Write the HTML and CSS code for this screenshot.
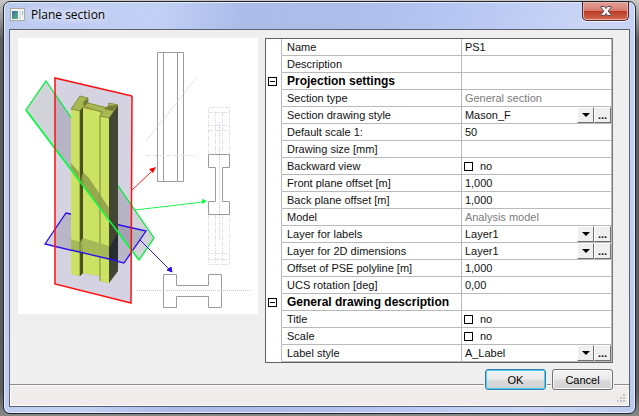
FILE: index.html
```html
<!DOCTYPE html>
<html lang="en">
<head>
<meta charset="utf-8">
<title>Plane section</title>
<link rel="stylesheet" href="styles.css">
</head>
<body>
<main class="window">
  <header class="titlebar">
    <svg class="app-icon" width="15" height="13" viewBox="0 0 15 13" aria-hidden="true">
      <defs><linearGradient id="pane" x1="0" y1="0" x2="1" y2="1"><stop offset="0" stop-color="#3b6ea0"/><stop offset="1" stop-color="#58b87e"/></linearGradient></defs>
      <rect x=".5" y=".5" width="14" height="12" fill="#f4f4f2" stroke="#aaa9a4"/>
      <rect x="2" y="3" width="6" height="8" fill="url(#pane)"/>
      <rect x="9" y="3" width="2" height="8" fill="#e1e1e1"/>
      <rect x="12" y="3" width="1" height="4" fill="#98b7aa"/>
    </svg>
    <h1 class="title">Plane section</h1>
    <button class="close" type="button" aria-label="Close">
      <svg width="12" height="10" viewBox="0 0 12 10" aria-hidden="true"><path d="M1 .5h3.500L6 2.500 7.500.5H11v1L8.200 5 11 8.500v1H7.500L6 7.500 4.500 9.500H1v-1L3.800 5 1 1.500z" fill="#f5f5f5" stroke="#59494f"/></svg>
    </button>
  </header>
  <form class="client">
    <div class="content">
      <figure class="preview">
        <svg class="drawing" viewBox="0 0 240 276" role="img" aria-label="Section planes through a column">
          <path d="M37 40 114 58 113 265 37 246z" fill="#d5d2e1"/>
          <path d="M28 43 136 200 121 222 8 72z" fill="#77778c" fill-opacity=".33"/>
          <path d="M48 175 128 193 106 225 27 206z" fill="#77778c" fill-opacity=".3"/>
          <path d="M28 43 136 200 121 222 8 72z" fill="none" stroke="#00f03c" stroke-width="1.300"/>
          <path d="M48 175 128 193 106 225 27 206z" fill="none" stroke="#2a0df0" stroke-width="1.300"/>
          <path d="M53 71 62 58 70 60V65L90 70 91 65 100 67V233L91 245 82 243V238L65 235 62 238 53 236z" fill="#a4b64e"/>
          <path d="M91 80 100 67V233L91 245z" fill="#424632"/>
          <path d="M53 71 62 73V238L53 236zM65 70 82 74V238L65 235zM82 78 91 80V245L82 243z" fill="#cce262"/>
          <path d="M62 72 65 69V235L62 238z" fill="#484c22"/>
          <path d="M62 58 70 60V65L65 69 62 72 53 71zM65 69 70 65 90 70 91 65 100 67 91 80 82 78 85 74z" fill="#a9b951"/>
          <path d="M53 71 62 58 70 60V65L90 70 91 65 100 67 91 80 82 78 85 74 65 69 62 73z" fill="none" stroke="#737b35" stroke-width=".7"/>
          <path d="M65 64 70 60V65L66 69zM90 68 100 67 95 73 86 71z" fill="#747c36"/>
          <path d="M82 78V243" stroke="#76823a"/>
          <path d="M53 125 61 134V141L53 132zM65 134 71 140 91 170V182L62 143z" fill="#8b9b48" fill-opacity=".8"/>
          <path d="M53 201 62 204 65 200 91 208V221L53 212z" fill="#a3b557" fill-opacity=".9"/>
          <path d="M91 210 100 195V223L91 221z" fill="#272c31"/>
          <path d="M62 73V238" stroke="#5e6630" stroke-width=".7"/>
          <path d="M53 212 91 221 100 223" fill="none" stroke="#2a0df0" stroke-width="1.300"/>
          <path d="M8 72 121 222" stroke="#08ff42" stroke-width="1.500"/>
          <path d="M114 58 113 265 37 246V40L114 58" fill="none" stroke="#ff1010" stroke-width="1.500"/>
          <path d="M70 69v2" stroke="#de572c"/>
          <path d="M113 153 133 134" stroke="#ff2020"/>
          <path d="M138 129 135 135 131 131z" fill="#f00"/>
          <path d="M117 172 185 164" stroke="#20f250"/>
          <path d="M189 163 184 161V166z" fill="#08ff42"/>
          <path d="M122 202 151 231" stroke="#321aee"/>
          <path d="M154 234 149 232 153 229z" fill="#2a0df0" stroke="#2a0df0"/>
          <g fill="none" stroke="#9c9c9c">
            <path d="M139.500 14.500H165.500V143.500H139.500zM145.500 14.500V143.500M159.500 14.500V143.500"/>
            <path d="M190.500 116.500H211.500V129.500H204.500V163.500H211.500V176.500H190.500V163.500H197.500V129.500H190.500z"/>
            <path d="M145.500 236.500H158.500V247.500H190.500V236.500H203.500V269.500H190.500V258.500H158.500V269.500H145.500z"/>
          </g>
          <g fill="none" stroke="#e0e0ee" stroke-dasharray="4 1 1 1">
            <path d="M190.500 116V69.500H211.500V116M190.500 74.500H211.500M190.500 87.500H211.500M190.500 92.500H211.500M197.500 74V116M204.500 74V116"/>
            <path d="M190.500 177V226.500H211.500V177M190.500 215.500H211.500M190.500 221.500H211.500M197.500 177V226M204.500 177V226"/>
            <path d="M128 117.500H178"/>
          </g>
          <path d="M128 103 179 39M201.500 85V203M119 252.500H233" fill="none" stroke="#c6c6f6" stroke-dasharray="1 1"/>
        </svg>
      </figure>
      <table class="grid">
        <colgroup><col class="col-toggle"><col class="col-label"><col></colgroup>
        <tbody>
          <tr><td></td><th scope="row"><label for="name">Name</label></th><td><input class="text" id="name" value="PS1"></td></tr>
          <tr><td></td><th scope="row"><label for="desc">Description</label></th><td><input class="text" id="desc"></td></tr>
          <tr class="group"><td><button class="toggle" type="button" aria-label="Collapse Projection settings"></button></td><th scope="row">Projection settings</th><td></td></tr>
          <tr><td></td><th scope="row">Section type</th><td class="fixed">General section</td></tr>
          <tr><td></td><th scope="row"><label for="dstyle">Section drawing style</label></th><td><div class="picker"><select id="dstyle"><option>Mason_F</option></select><span class="arrow"></span><button class="more" type="button">...</button></div></td></tr>
          <tr><td></td><th scope="row"><label for="dscale">Default scale 1:</label></th><td><input class="text" id="dscale" value="50"></td></tr>
          <tr><td></td><th scope="row"><label for="dsize">Drawing size [mm]</label></th><td><input class="text" id="dsize"></td></tr>
          <tr><td></td><th scope="row">Backward view</th><td><label class="check"><input type="checkbox">no</label></td></tr>
          <tr><td></td><th scope="row"><label for="front">Front plane offset [m]</label></th><td><input class="text" id="front" value="1,000"></td></tr>
          <tr><td></td><th scope="row"><label for="back">Back plane offset [m]</label></th><td><input class="text" id="back" value="1,000"></td></tr>
          <tr><td></td><th scope="row">Model</th><td class="fixed">Analysis model</td></tr>
          <tr><td></td><th scope="row"><label for="llabels">Layer for labels</label></th><td><div class="picker"><select id="llabels"><option>Layer1</option></select><span class="arrow"></span><button class="more" type="button">...</button></div></td></tr>
          <tr><td></td><th scope="row"><label for="ldims">Layer for 2D dimensions</label></th><td><div class="picker"><select id="ldims"><option>Layer1</option></select><span class="arrow"></span><button class="more" type="button">...</button></div></td></tr>
          <tr><td></td><th scope="row"><label for="pse">Offset of PSE polyline [m]</label></th><td><input class="text" id="pse" value="1,000"></td></tr>
          <tr><td></td><th scope="row"><label for="ucs">UCS rotation [deg]</label></th><td><input class="text" id="ucs" value="0,00"></td></tr>
          <tr class="group"><td><button class="toggle" type="button" aria-label="Collapse General drawing description"></button></td><th scope="row">General drawing description</th><td></td></tr>
          <tr><td></td><th scope="row">Title</th><td><label class="check"><input type="checkbox">no</label></td></tr>
          <tr><td></td><th scope="row">Scale</th><td><label class="check"><input type="checkbox">no</label></td></tr>
          <tr><td></td><th scope="row"><label for="lstyle">Label style</label></th><td><div class="picker"><select id="lstyle"><option>A_Label</option></select><span class="arrow"></span><button class="more" type="button">...</button></div></td></tr>
        </tbody>
      </table>
    </div>
    <footer class="footer">
      <button class="btn btn-default" type="button">OK</button>
      <button class="btn" type="button">Cancel</button>
    </footer>
    <div class="status">
      <svg width="9" height="9" viewBox="0 0 9 9" aria-hidden="true"><path d="M6 0h2v2H6zM3 3h2v2H3zM6 3h2v2H6zM0 6h2v2H0zM3 6h2v2H3zM6 6h2v2H6z" fill="#c8c4c4"/></svg>
    </div>
  </form>
</main>
</body>
</html>
```
FILE: styles.css
```css
* { box-sizing: border-box; }

body {
  margin: 0;
  padding: 1px 3px 3px;
  min-height: 100vh;
  background: linear-gradient(#c8c8c8, #5c5c5c 40px, #5c5c5c 94%, #8a8a8a);
  font: 11px/16px "Liberation Sans", Arial, sans-serif;
  color: #111;
}

button, input, select { font: inherit; color: inherit; }

.window {
  padding: 0 5px 6px;
  border: 1px solid #20242e;
  border-radius: 7px;
  background: linear-gradient(100deg, #bccaf0, #c3d0f5 22%, #acbce9 34%, #adbeeb 50%, #b7c6f2 65%, #cbd6f6 85%, #bdcaf0);
  box-shadow: inset 0 0 0 1px #e6ecff;
}

.titlebar {
  display: flex;
  align-items: flex-start;
  height: 27px;
}
.app-icon { margin: 6px 6px 0 1px; }
.title {
  flex: 1;
  margin: 5px 0 0;
  font: 12px/16px "Open Sans", "Noto Sans", sans-serif;
  color: #000;
  text-shadow: 0 0 8px #fff, 0 0 8px #fff;
}
.close {
  display: flex;
  align-items: center;
  justify-content: center;
  width: 47px;
  height: 19px;
  margin-right: 1px;
  padding: 0 0 1px;
  border: 1px solid #51242c;
  border-top: 0;
  border-radius: 0 0 5px 5px;
  background: linear-gradient(#e3a49b, #d77b6d 48%, #bd3b27 52%, #d26a4c);
  box-shadow: inset 0 0 0 1px #eab3a8, 0 1px 0 #eef2ff;
}

.client {
  border: 1px solid #59616e;
  background: #efefef;
}
.content {
  display: flex;
  align-items: flex-start;
  gap: 7px;
  padding: 8px 16px 0 8px;
}
.preview {
  flex: 0 0 240px;
  margin: 0;
  background: #fff;
}
.drawing { display: block; width: 100%; }

.grid {
  flex: 1;
  table-layout: fixed;
  border: 1px solid #626262;
  border-right-color: #777;
  border-spacing: 0;
  background: #fff;
}
.col-toggle { width: 16px; }
.col-label { width: 52%; }
.grid td, .grid th {
  height: 17px;
  padding: 0;
  border-right: 1px solid #b9b9b9;
  border-bottom: 1px solid #b9b9b9;
  line-height: 16px;
  text-align: left;
  font-weight: 400;
  white-space: nowrap;
}
.grid td:first-child { border-bottom-color: #fff; }
.grid th { padding-left: 5px; }
.grid .group th { font-size: 12px; font-weight: 700; color: #000; }
.grid .fixed { padding-left: 3px; color: #7b7b7b; }

.text {
  display: block;
  width: 100%;
  height: 16px;
  padding: 0 3px;
  border: 0;
  background: none;
}
.toggle {
  display: flex;
  align-items: center;
  justify-content: center;
  width: 9px;
  height: 9px;
  margin-left: 2px;
  padding: 0;
  border: 1px solid #000;
  background: #fff;
}
.toggle::before {
  content: "";
  width: 5px;
  height: 1px;
  background: #000;
}
.check {
  display: flex;
  align-items: center;
  gap: 7px;
  padding-left: 2px;
}
.check input {
  appearance: none;
  width: 9px;
  height: 9px;
  margin: 0;
  border: 1px solid #000;
  background: #fff;
}

.picker {
  display: grid;
  grid-template-columns: 1fr 17px 17px;
  height: 16px;
}
.picker select {
  grid-area: 1 / 1 / 2 / 3;
  appearance: none;
  padding: 0 20px 0 3px;
  border: 0;
  background: none;
}
.arrow, .more {
  border: 1px solid #fff;
  border-right-color: #707070;
  border-bottom-color: #707070;
  background: #efefef;
}
.arrow {
  grid-area: 1 / 2;
  display: flex;
  align-items: center;
  justify-content: center;
  pointer-events: none;
}
.arrow::before {
  content: "";
  border: 4px solid transparent;
  border-top-color: #000;
  border-bottom: 0;
}
.more {
  grid-area: 1 / 3;
  padding: 0;
  line-height: 12px;
  font-weight: 700;
  text-align: center;
}

.footer {
  display: flex;
  justify-content: flex-end;
  gap: 6px;
  height: 21px;
  margin-top: 6px;
  padding-right: 16px;
  background: linear-gradient(#efefef 15px, #8d8d8d 15px, #8d8d8d 16px, #fff 16px, #fff 17px, #f0eceb 17px);
}
.btn {
  width: 61px;
  height: 21px;
  padding: 0;
  border: 1px solid #707070;
  border-radius: 3px;
  background: linear-gradient(#f3f3f3, #ebebeb 48%, #dcdcdc 52%, #d0d0d0);
  box-shadow: inset 0 0 0 1px #fafafa, 0 0 0 1px #efefef;
  color: #000;
}
.btn-default {
  border-color: #3b7fa8;
  box-shadow: inset 0 0 0 1px #48cdf5, 0 0 0 1px #efefef;
}
.status {
  display: flex;
  align-items: flex-end;
  justify-content: flex-end;
  height: 16px;
  padding: 0 2px 2px;
  border: 1px solid #fff;
  border-top: 0;
  background: #f0eceb;
}
```
